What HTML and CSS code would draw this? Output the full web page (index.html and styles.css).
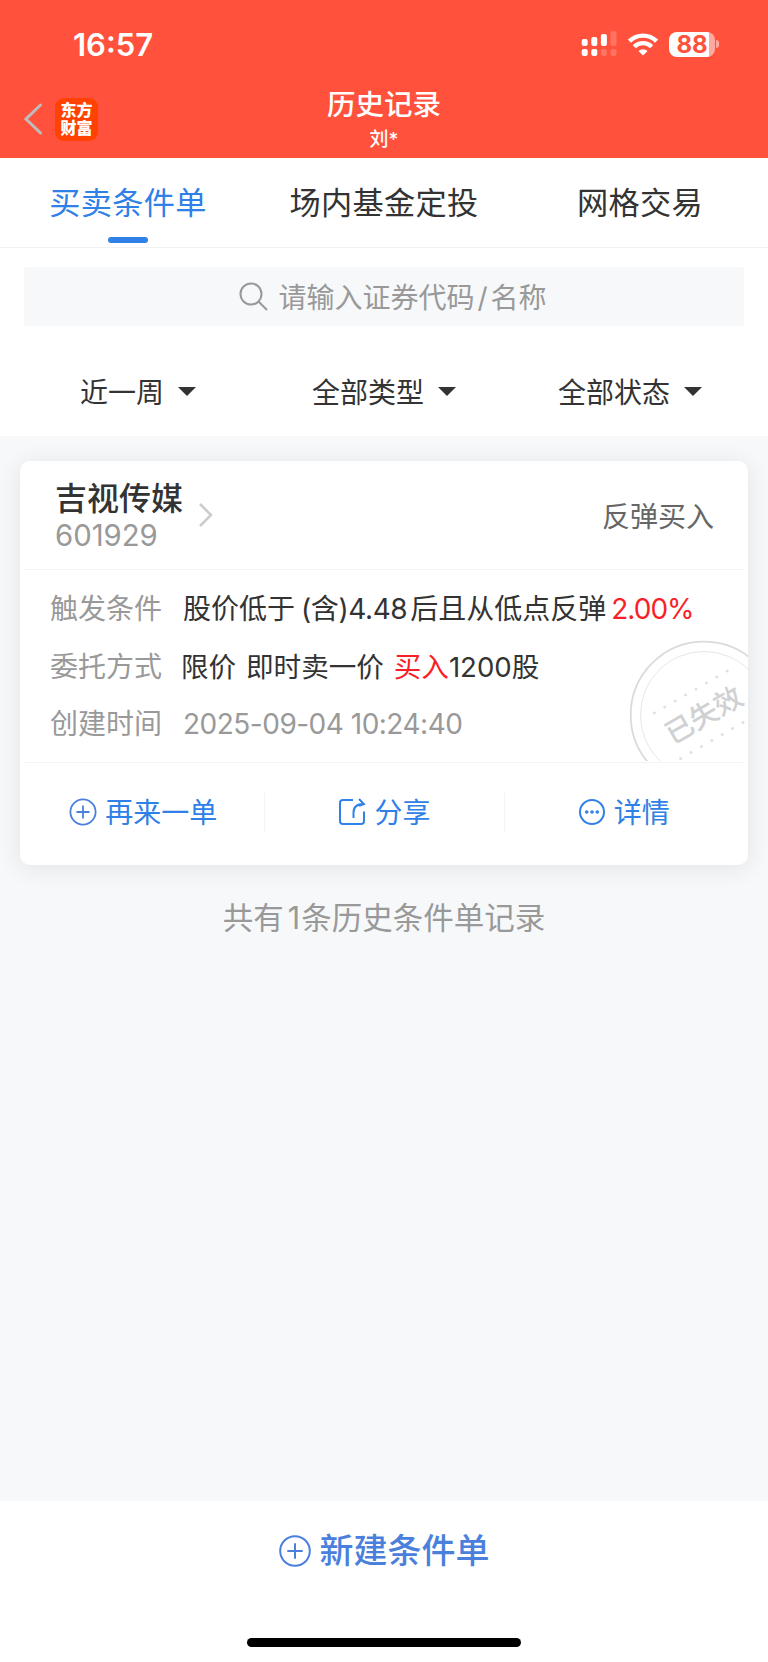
FILE: index.html
```html
<!DOCTYPE html>
<html lang="zh-CN">
<head>
  <meta charset="UTF-8">
  <title>历史记录</title>
  <link rel="stylesheet" href="styles.css">
</head>
<body>
  <!-- Header -->
  <header class="header">
    <div class="status-bar">
      <span class="time">16:57</span>
      <div class="status-icons">
        <svg class="signal" width="36" height="26" viewBox="0 0 36 26" fill="#fff">
          <rect x="0.7" y="8" width="6" height="7" rx="2"/>
          <rect x="10.3" y="6" width="6" height="9" rx="2"/>
          <rect x="19.9" y="3" width="6" height="12" rx="2"/>
          <rect x="29.5" y="0" width="6" height="15" rx="2" opacity="0.2"/>
          <rect x="0.7" y="18" width="6" height="7" rx="2"/>
          <rect x="10.3" y="18" width="6" height="7" rx="2"/>
          <rect x="19.9" y="18" width="6" height="7" rx="2" opacity="0.2"/>
          <rect x="29.5" y="18" width="6" height="7" rx="2" opacity="0.2"/>
        </svg>
        <svg class="wifi" width="30" height="23" viewBox="0 0 30 23" fill="none" stroke="#fff" stroke-width="4.4">
          <path d="M1.5 8.2a19.2 19.2 0 0 1 27 0"/>
          <path d="M6.3 13.7a12.4 12.4 0 0 1 17.4 0"/>
          <path d="M15 22.5l-4.6-4.4a6.6 6.6 0 0 1 9.2 0z" fill="#fff" stroke="none"/>
        </svg>
        <div class="battery"><span class="battery-num">88</span></div>
        <span class="battery-cap"></span>
      </div>
    </div>
    <div class="nav">
      <svg class="back" width="20" height="34" viewBox="0 0 20 34" fill="none" stroke="#bdbdbd" stroke-width="3" stroke-linecap="round">
        <path d="M17.5 3L3 17l14.5 14"/>
      </svg>
      <div class="logo"><span>东方</span><span>财富</span></div>
      <div class="nav-title">
        <h1>历史记录</h1>
        <p>刘*</p>
      </div>
    </div>
  </header>

  <!-- Tabs -->
  <nav class="tabs">
    <a class="tab active">买卖条件单</a>
    <a class="tab">场内基金定投</a>
    <a class="tab">网格交易</a>
  </nav>

  <!-- Search and filters -->
  <section class="search-area">
    <div class="search">
      <svg width="30" height="30" viewBox="0 0 30 30" fill="none" stroke="#999" stroke-width="2">
        <circle cx="12" cy="12" r="10.5"/>
        <path d="M19.5 19.5L28 28"/>
      </svg>
      <span class="search-text">请输入证券代码<i>/</i>名称</span>
    </div>
    <div class="filters">
      <div class="filter">近一周<span class="arrow"></span></div>
      <div class="filter">全部类型<span class="arrow"></span></div>
      <div class="filter">全部状态<span class="arrow"></span></div>
    </div>
  </section>

  <!-- Order list -->
  <main class="content">
    <div class="card">
      <div class="card-head">
        <div class="stock">
          <h2>吉视传媒</h2>
          <p>601929</p>
        </div>
        <svg class="chevron" width="16" height="26" viewBox="0 0 16 26" fill="none" stroke="#ccc" stroke-width="2.6">
          <path d="M2 2l11 11L2 24"/>
        </svg>
        <span class="order-type">反弹买入</span>
      </div>
      <div class="card-body">
        <div class="row">
          <span class="label">触发条件</span>
          <span class="value cond">股价低于<span class="price">(含)4.48</span>后且从低点反弹<span class="red rate">2.00%</span></span>
        </div>
        <div class="row">
          <span class="label">委托方式</span>
          <span class="value way">限价 即时卖一价 <span class="red buy">买入</span>1200股</span>
        </div>
        <div class="row">
          <span class="label">创建时间</span>
          <span class="value date">2025-09-04 10:24:40</span>
        </div>
        <div class="stamp">
          <svg width="150" height="150" viewBox="0 0 150 150" fill="none">
            <circle cx="75" cy="75" r="73.3" stroke="#d9dadb" stroke-width="1.8"/>
            <circle cx="75" cy="75" r="63.5" stroke="#e6e7e8" stroke-width="1"/>
            <g stroke="#dfe0e1" stroke-width="3" stroke-linecap="round" stroke-dasharray="0 12" transform="rotate(-30 75 75)">
              <path d="M33 48.5h86"/>
              <path d="M33 101h86"/>
            </g>
          </svg>
          <span class="stamp-text">已失效</span>
        </div>
      </div>
      <div class="card-actions">
        <a class="action">
          <svg width="28" height="28" viewBox="0 0 28 28" fill="none" stroke="#4a80dc" stroke-width="1.8">
            <circle cx="14" cy="14" r="12.6"/>
            <path d="M14 7.5v13M7.5 14h13"/>
          </svg>
          <span>再来一单</span>
        </a>
        <a class="action">
          <svg width="28" height="28" viewBox="0 0 28 28" fill="none" stroke="#2f80e7" stroke-width="2">
            <path d="M15 2H5a3 3 0 0 0-3 3v18a3 3 0 0 0 3 3h18a3 3 0 0 0 3-3V13.5"/>
            <path d="M15.5 20v-5.5c0-5 3-8.5 10-8.5M21 1l4.9 5L21 7.8"/>
          </svg>
          <span>分享</span>
        </a>
        <a class="action">
          <svg width="28" height="28" viewBox="0 0 28 28" fill="none" stroke="#2f80e7" stroke-width="2">
            <circle cx="14" cy="14" r="12"/>
            <g fill="#2f80e7" stroke="none">
              <circle cx="8.7" cy="14" r="1.8"/>
              <circle cx="14" cy="14" r="1.8"/>
              <circle cx="19.3" cy="14" r="1.8"/>
            </g>
          </svg>
          <span>详情</span>
        </a>
      </div>
    </div>
    <p class="total">共有<span>1</span>条历史条件单记录</p>
  </main>

  <!-- Bottom button -->
  <footer class="footer">
    <a class="create">
      <svg width="32" height="32" viewBox="0 0 32 32" fill="none" stroke="#4a80dc" stroke-width="2">
        <circle cx="16" cy="16" r="14.8"/>
        <path d="M16 8.3v15.4M8.3 16h15.4"/>
      </svg>
      <span>新建条件单</span>
    </a>
    <div class="home-bar"></div>
  </footer>
</body>
</html>
```

FILE: styles.css
```css
* {
  box-sizing: border-box;
  margin: 0;
  padding: 0;
}

body {
  display: flex;
  flex-direction: column;
  width: 768px;
  height: 1662px;
  background: #f6f8fa;
  color: #333;
  font-family: Inter, "Noto Sans CJK SC", sans-serif;
  font-size: 28px;
  overflow: hidden;
}

svg {
  display: block;
  flex: none;
}

/* Header */
.header {
  height: 158px;
  background: #ff513b;
  color: #fff;
}

.status-bar {
  display: flex;
  justify-content: space-between;
  align-items: center;
  height: 88px;
  padding: 0 49px 0 73px;
}

.time {
  font-size: 31px;
  font-weight: 600;
}

.status-icons {
  display: flex;
  align-items: center;
}

.wifi {
  margin: 0 11px;
}

.battery {
  width: 46px;
  height: 25px;
  border-radius: 8px;
  background: linear-gradient(to right, #fff 40px, #ffa89d 40px);
  color: #ff513b;
  text-align: center;
}

.battery-num {
  display: block;
  font-size: 24px;
  font-weight: 700;
  line-height: 25px;
}

.battery-cap {
  width: 3px;
  height: 8px;
  margin-left: 1px;
  border-radius: 0 4px 4px 0;
  background: #ffa89d;
}

.nav {
  position: relative;
  display: flex;
  align-items: center;
  height: 62px;
  padding-left: 23px;
}

.logo {
  display: flex;
  flex-direction: column;
  align-items: center;
  justify-content: center;
  width: 43px;
  height: 43px;
  margin-left: 12px;
  border-radius: 9px;
  background: #ff4200;
  font-size: 16px;
  font-weight: 900;
  line-height: 18px;
}

/* title stays centred whatever is on the left */
.nav-title {
  position: absolute;
  left: 0;
  right: 0;
  top: -3px;
  text-align: center;
}

.nav-title h1 {
  font-size: 28.5px;
  font-weight: 500;
  line-height: 40px;
}

.nav-title p {
  font-size: 19px;
  font-weight: 500;
  line-height: 29px;
}

/* Tabs */
.tabs {
  display: flex;
  height: 90px;
  background: #fff;
  border-bottom: 1px solid #eff1f2;
}

.tab {
  display: flex;
  flex-direction: column;
  align-items: center;
  flex: 1;
  padding-top: 22px;
  font-size: 31.2px;
  letter-spacing: 0.3px;
  line-height: 46px;
}

.tab.active {
  color: #2f80e7;
}

.tab.active::after {
  content: "";
  width: 40px;
  height: 6px;
  margin-top: 11px;
  border-radius: 3px;
  background: #2f80e7;
}

/* Search */
.search-area {
  height: 188px;
  padding: 19px 24px 0;
  background: #fff;
}

.search {
  display: flex;
  align-items: center;
  justify-content: center;
  gap: 9px;
  height: 59px;
  padding-left: 18px;
  border-radius: 3px;
  background: #f6f8fa;
  color: #999;
}

.search-text {
  padding-bottom: 2px;
}

.search-text i {
  margin: 0 3px;
  font-style: normal;
}

.filters {
  display: flex;
  height: 109px;
  margin: 0 -9px;
  padding-top: 21px;
}

.filter {
  display: flex;
  align-items: center;
  justify-content: center;
  flex: 1;
  height: 88px;
}

.arrow {
  margin-left: 14px;
  border: 9px solid transparent;
  border-top-color: #333;
  border-bottom: none;
}

/* Card */
.content {
  flex: 1;
  padding: 25px 20px 0;
}

.card {
  height: 404px;
  padding: 0 5px;
  border-radius: 10px;
  background: #fff;
  box-shadow: 0 3px 24px rgba(0, 0, 0, 0.09);
}

.card-head {
  display: flex;
  align-items: center;
  height: 109px;
  padding: 0 29px 0 30px;
  border-bottom: 1px solid #f1f3f4;
}

.stock h2 {
  font-size: 32px;
  font-weight: 500;
  line-height: 40px;
}

.stock p {
  color: #999;
  font-size: 29.3px;
  line-height: 33px;
}

.chevron {
  margin-left: 15px;
}

.order-type {
  margin-left: auto;
  color: #666;
}

.card-body {
  position: relative;
  display: flex;
  flex-direction: column;
  height: 193px;
  padding: 11px 25px 0;
  border-bottom: 1px solid #f1f3f4;
}

.row {
  display: flex;
  height: 57.5px;
  line-height: 57px;
  white-space: nowrap;
}

.label {
  width: 133px;
  color: #999;
}

.price {
  margin: 0 3px 0 6px;
  letter-spacing: -0.4px;
}

.rate {
  margin-left: 5px;
  letter-spacing: -1px;
}

.red {
  color: #f91f28;
}

.way {
  margin-left: -2px;
  font-size: 27.6px;
  word-spacing: 2px;
}

.date {
  color: #999;
  letter-spacing: -0.5px;
}

/* status stamp, cut off by the card edge */
.stamp {
  position: absolute;
  right: -5px;
  bottom: 1px;
  width: 119px;
  height: 121px;
  overflow: hidden;
}

.stamp-text {
  position: absolute;
  left: 25px;
  top: 55px;
  width: 100px;
  color: #cfd1d3;
  font-size: 28px;
  font-weight: 500;
  line-height: 40px;
  text-align: center;
  white-space: nowrap;
  transform: rotate(-30deg);
}

.card-actions {
  display: flex;
  align-items: center;
  height: 98px;
  color: #2f80e7;
}

.action {
  display: flex;
  align-items: center;
  justify-content: center;
  gap: 8px;
  width: 33.33%;
  height: 39px;
}

.action:first-child {
  padding-right: 3px;
}

.action span {
  padding-bottom: 2px;
}

.action + .action {
  border-left: 1px solid #f1f3f4;
}

.total {
  margin-top: 31px;
  color: #999;
  font-size: 30.5px;
  line-height: 44px;
  text-align: center;
}

.total span {
  margin: 0 1px 0 4px;
}

/* Footer */
.footer {
  display: flex;
  flex-direction: column;
  align-items: center;
  height: 161px;
  padding-top: 25px;
  background: #fff;
}

.create {
  display: flex;
  align-items: center;
  gap: 9px;
  height: 50px;
  color: #4a80dc;
  font-size: 34px;
  font-weight: 500;
}

.create span {
  padding-bottom: 5px;
}

.home-bar {
  width: 274px;
  height: 9px;
  margin-top: 62px;
  border-radius: 5px;
  background: #000;
}
```
